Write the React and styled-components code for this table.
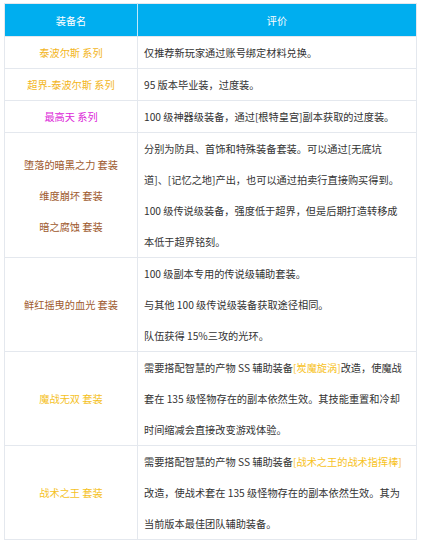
import React from "react";
import styled, { createGlobalStyle } from "styled-components";

const GlobalStyle = createGlobalStyle`
  html, body {
    margin: 0;
    padding: 0;
    background: #ffffff;
  }
  body {
    font-family: "Microsoft YaHei", "Noto Sans CJK SC", "Noto Sans", sans-serif;
  }
`;

const Wrap = styled.div`
  padding: 3px 4px 0 4px;
`;

const Table = styled.table`
  width: 413px;
  border-collapse: collapse;
  table-layout: fixed;
  font-size: 10.2px;
  color: #333333;
  border: 1px solid #e4e8ee;
`;

const HeadCell = styled.th`
  background: #00aeef;
  color: #ffffff;
  font-weight: normal;
  height: 32px;
  padding: 0;
  text-align: center;
  border-left: 1px solid #bfe9fb;
  &:first-child {
    border-left: none;
  }
`;

const Row = styled.tr`
  border-top: 1px solid #e4e8ee;
`;

const NameCell = styled.td`
  width: 133px;
  padding: 0;
  text-align: center;
  vertical-align: middle;
  line-height: 31px;
  border-right: 1px solid #e4e8ee;
  color: ${(p) => p.$color};
`;

const DescCell = styled.td`
  padding: 0 6px;
  line-height: 31px;
  vertical-align: middle;
`;

const Line = styled.span`
  display: block;
  white-space: pre;
`;

const Hl = styled.span`
  color: #f7c21d;
`;

const YELLOW = "#f3b51b";
const PINK = "#dc1fd8";
const BROWN = "#9e5a2e";
const GOLD = "#f5c21f";

const rows = [
  { names: ["泰波尔斯 系列"], color: YELLOW, lines: ["仅推荐新玩家通过账号绑定材料兑换。"] },
  { names: ["超界-泰波尔斯 系列"], color: YELLOW, lines: ["95 版本毕业装，过度装。"] },
  { names: ["最高天 系列"], color: PINK, lines: ["100 级神器级装备，通过[根特皇宫]副本获取的过度装。"] },
  {
    names: ["堕落的暗黑之力 套装", "维度崩坏 套装", "暗之腐蚀 套装"],
    color: BROWN,
    lines: [
      "分别为防具、首饰和特殊装备套装。可以通过[无底坑",
      "道]、[记忆之地]产出，也可以通过拍卖行直接购买得到。",
      "100 级传说级装备，强度低于超界，但是后期打造转移成",
      "本低于超界铭刻。",
    ],
  },
  {
    names: ["鲜红摇曳的血光 套装"],
    color: BROWN,
    lines: [
      "100 级副本专用的传说级辅助套装。",
      "与其他 100 级传说级装备获取途径相同。",
      "队伍获得 15%三攻的光环。",
    ],
  },
  {
    names: ["魔战无双 套装"],
    color: GOLD,
    lines: [
      <>需要搭配智慧的产物 SS 辅助装备<Hl>[炭魔旋涡]</Hl>改造，使魔战</>,
      "套在 135 级怪物存在的副本依然生效。其技能重置和冷却",
      "时间缩减会直接改变游戏体验。",
    ],
  },
  {
    names: ["战术之王 套装"],
    color: GOLD,
    lines: [
      <>需要搭配智慧的产物 SS 辅助装备<Hl>[战术之王的战术指挥棒]</Hl></>,
      "改造，使战术套在 135 级怪物存在的副本依然生效。其为",
      "当前版本最佳团队辅助装备。",
    ],
  },
];

const App = () => (
  <Wrap>
    <GlobalStyle />
    <Table>
      <colgroup>
        <col style={{ width: "133px" }} />
        <col />
      </colgroup>
      <thead>
        <tr>
          <HeadCell>装备名</HeadCell>
          <HeadCell>评价</HeadCell>
        </tr>
      </thead>
      <tbody>
        {rows.map((r, i) => (
          <Row key={i}>
            <NameCell $color={r.color}>
              {r.names.map((n, j) => (
                <Line key={j}>{n}</Line>
              ))}
            </NameCell>
            <DescCell>
              {r.lines.map((l, j) => (
                <Line key={j}>{l}</Line>
              ))}
            </DescCell>
          </Row>
        ))}
      </tbody>
    </Table>
  </Wrap>
);

export default App;
